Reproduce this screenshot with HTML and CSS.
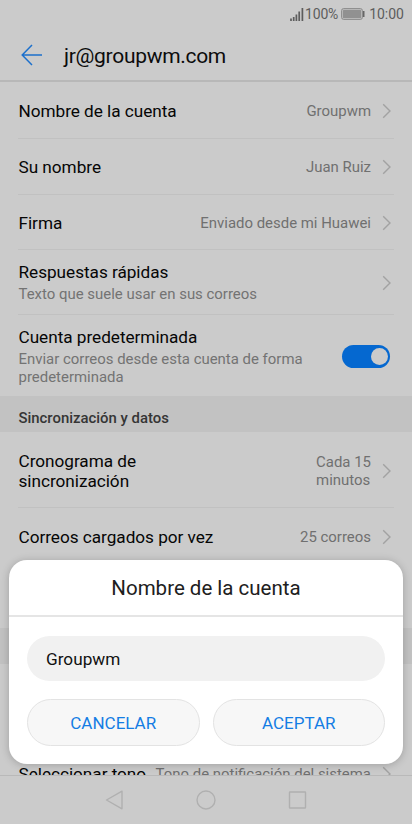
FILE: index.html
```html
<!DOCTYPE html>
<html lang="es">
<head>
<meta charset="utf-8">
<title>Nombre de la cuenta</title>
<link rel="stylesheet" href="styles.css">
</head>
<body>
<svg width="0" height="0" class="defs"><symbol id="chev" viewBox="0 0 10 16"><path d="M1.200 1.200 8 8l-6.800 6.800" fill="none" stroke="#a2a2a2" stroke-width="1.400"/></symbol></svg>
<div class="screen">
  <div class="status">
    <svg class="signal" width="14" height="13" viewBox="0 0 14 13"><path d="M1 10.500V13M3.700 9V13M6.400 6.500V13M9.200 3.500V13M12.400 0V13" stroke="#5d5d5d" stroke-width="1.700"/></svg>
    <span class="pct">100%</span>
    <svg class="battery" width="24" height="12" viewBox="0 0 24 12"><rect x=".6" y=".6" width="20.800" height="10.800" rx="2" fill="#bcbcbc" stroke="#8b8b8b"/><rect x="2" y="2" width="18" height="8" rx=".5" fill="#919191"/><path d="M22.700 3v6" stroke="#666" stroke-width="1.600"/></svg>
    <span class="time">10:00</span>
  </div>
  <header class="header">
    <svg width="22" height="22" viewBox="0 0 22 22"><path d="M11 1 1.200 11 11 21M1.200 11H21" fill="none" stroke="#1c70cc" stroke-width="1.500"/></svg>
    <h1>jr@groupwm.com</h1>
  </header>
  <main class="list">
    <div class="row r1"><span class="label">Nombre de la cuenta</span><span class="value">Groupwm</span><svg class="chev"><use href="#chev"/></svg></div>
    <div class="row r2"><span class="label">Su nombre</span><span class="value">Juan Ruiz</span><svg class="chev"><use href="#chev"/></svg></div>
    <div class="row r3"><span class="label">Firma</span><span class="value">Enviado desde mi Huawei</span><svg class="chev"><use href="#chev"/></svg></div>
    <div class="row r4"><div class="label">Respuestas rápidas<small>Texto que suele usar en sus correos</small></div><svg class="chev"><use href="#chev"/></svg></div>
    <div class="row r5"><div class="label">Cuenta predeterminada<small>Enviar correos desde esta cuenta de forma<br>predeterminada</small></div><span class="switch"></span></div>
    <h2 class="section">Sincronización y datos</h2>
    <div class="row r6"><span class="label">Cronograma de<br>sincronización</span><span class="value">Cada 15<br>minutos</span><svg class="chev"><use href="#chev"/></svg></div>
    <div class="row r7"><span class="label">Correos cargados por vez</span><span class="value">25 correos</span><svg class="chev"><use href="#chev"/></svg></div>
    <div class="row r8"></div>
    <div class="section"></div>
    <div class="row r9"></div>
    <div class="row r10"><span class="label">Seleccionar tono</span><span class="value">Tono de notificación del sistema</span><svg class="chev"><use href="#chev"/></svg></div>
  </main>
  <nav class="nav">
    <svg width="206" height="24" viewBox="0 0 206 24" fill="none" stroke="#b0b0b0" stroke-width="1.400" stroke-linejoin="round"><path d="M19 3.200V20.800L3.500 12Z"/><circle cx="103" cy="12" r="9"/><rect x="186.500" y="4" width="16" height="16" rx=".5"/></svg>
  </nav>
  <section class="dialog">
    <h2>Nombre de la cuenta</h2>
    <div class="body">
      <div class="field"><span>Groupwm</span></div>
      <div class="buttons"><button><span>CANCELAR</span></button><button><span>ACEPTAR</span></button></div>
    </div>
  </section>
</div>
</body>
</html>
```
FILE: styles.css
```css
* { box-sizing: border-box; }
body { margin: 0; font-family: Roboto, sans-serif; }
h1, h2 { margin: 0; font-weight: 400; }
.defs { position: absolute; }
.screen { position: relative; width: 412px; height: 824px; overflow: hidden; background: #cbcbcb; display: flex; flex-direction: column; }
.status { height: 28px; flex: none; display: flex; align-items: center; justify-content: flex-end; padding-right: 8px; font-size: 14px; color: #5d5d5d; }
.signal { margin-right: 1px; }
.pct { letter-spacing: -.2px; }
.battery { margin: 0 4px 0 3px; }
.header { height: 54px; flex: none; display: flex; align-items: center; padding: 1px 0 0 21px; border-bottom: 2px solid #b8b8b8; }
.header h1 { margin-left: 21px; font-size: 21px; letter-spacing: -.3px; line-height: 26px; color: #0c0c0c; padding-top: 2px; }
.list { flex: 1; min-height: 0; overflow: hidden; }
.row { margin: 0 18px; padding: 0 2px 0 .5px; display: flex; align-items: center; border-bottom: 1px solid #c1c1c1; }
.label { flex: 1; font-size: 17.200px; letter-spacing: -.03px; line-height: 20px; color: #060606; white-space: nowrap; }
.label small { display: block; font-size: 14.950px; letter-spacing: 0; line-height: 18px; color: #737373; margin-top: 3px; }
.value { font-size: 14.950px; line-height: 18px; color: #707070; white-space: nowrap; }
.chev { width: 10px; height: 16px; margin-left: 11px; flex: none; }
.r1 { height: 57px; padding-top: 2px; }
.r2 { height: 56px; }
.r3 { height: 55px; padding-top: 1px; }
.r4 { height: 65px; padding-top: 1px; }
.r5 { height: 81px; border: 0; padding-right: 4px; padding-top: 1px; }
.section { height: 36px; padding: 4px 0 0 18.500px; background: #c2c2c2; font-size: 14.900px; line-height: 36px; font-weight: 500; color: #353535; }
.r6 { height: 76px; padding-top: 2px; }
.r7 { height: 56px; padding-top: 2px; }
.r8 { height: 64px; border: 0; }
.r9 { height: 83px; }
.r10 { height: 55px; }
.switch { width: 48px; height: 23px; border-radius: 12px; background: #0568d0; display: flex; justify-content: flex-end; padding: 3px 2px; }
.switch::after { content: ""; width: 17px; height: 17px; border-radius: 50%; background: #cbcbcb; }
.nav { height: 49px; flex: none; border-top: 1px solid #b9b9b9; display: flex; align-items: center; justify-content: center; }
.dialog { position: absolute; left: 9px; top: 560px; width: 394px; height: 204px; border-radius: 18px; background: #fff; box-shadow: 0 1px 8px rgba(0,0,0,.22); }
.dialog h2 { height: 57px; line-height: 57px; border-bottom: 2px solid #e5e5e5; text-align: center; font-size: 20.500px; color: #202020; }
.body { padding: 19px 18px 0; }
.field { height: 45px; border-radius: 23px; background: #f1f1f1; padding-left: 19px; line-height: 47px; font-size: 17.200px; color: #111; }
.buttons { display: flex; gap: 13px; margin-top: 18px; }
button { flex: 1; height: 47px; border: 1px solid #e3e3e3; border-radius: 24px; background: #f7f7f7; font: 17px Roboto, sans-serif; color: #147de4; padding: 1px 0; }
```
